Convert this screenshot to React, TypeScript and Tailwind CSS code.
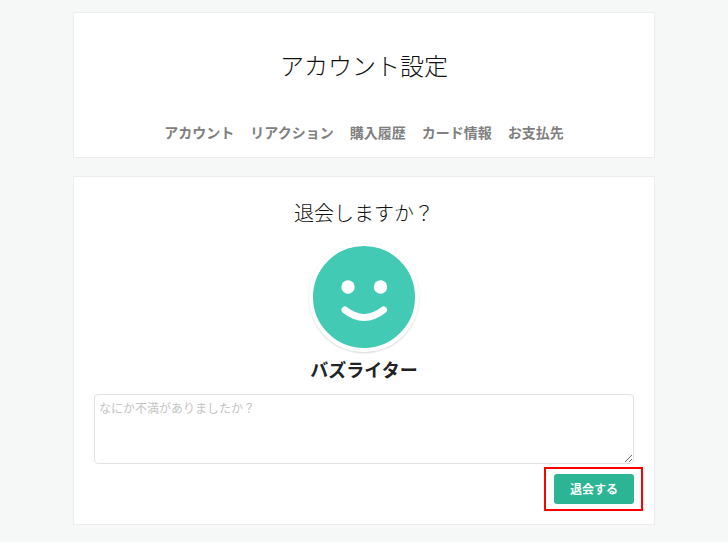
export default function App() {
  return (
    <div className="min-h-[542px] bg-[#f6f8f8] flex flex-col items-center pt-3 gap-[18px]" style={{ fontFamily: '"Noto Sans CJK JP", sans-serif' }}>
      <div className="w-[582px] h-[146px] bg-white border border-[#ececec] flex flex-col items-center">
        <h1 className="mt-[32px] text-[24px] leading-[40px] font-light text-[#111]">アカウント設定</h1>
        <nav className="mt-[37px] flex gap-4 text-[14px] leading-5 font-bold text-[#808080]">
          <span>アカウント</span><span>リアクション</span><span>購入履歴</span><span>カード情報</span><span>お支払先</span>
        </nav>
      </div>
      <div className="w-[582px] h-[349px] bg-white border border-[#ececec] flex flex-col items-center px-5">
        <h2 className="mt-[21px] text-[20px] leading-[30px] font-light text-[#111]">退会しますか？</h2>
        <div className="mt-[14px] w-[110px] h-[110px] shrink-0 rounded-full bg-[#42cab5] border-4 border-white shadow-[0_1px_2px_rgba(0,0,0,0.16)]">
          <svg viewBox="0 0 102 102" className="w-full h-full block">
            <circle cx="35" cy="41" r="6.7" fill="#fff" />
            <circle cx="67.5" cy="41" r="6.7" fill="#fff" />
            <path d="M32 64 Q51 79 70.5 64" fill="none" stroke="#fff" strokeWidth="7" strokeLinecap="round" />
          </svg>
        </div>
        <div className="mt-[2px] text-[18px] leading-[30px] font-bold text-[#222]">バズライター</div>
        <textarea placeholder="なにか不満がありましたか？" className="mt-[10px] w-full h-[70px] shrink-0 bg-white border border-[#e2e2e2] rounded-[4px] px-[4px] py-[3px] text-[12px] leading-5 placeholder:text-[#c4c4c4]" />
        <div className="w-full flex justify-end mt-[3px]">
          <div className="relative pt-[7px] pb-[7px]">
            <button className="block w-[80px] h-[30px] rounded-[3px] bg-[#2bb594] text-white text-[12px] font-bold">退会する</button>
            <div className="absolute -left-[10px] -right-[9px] top-0 bottom-0 border-2 border-[#ff0000]"></div>
          </div>
        </div>
      </div>
    </div>
  );
}
